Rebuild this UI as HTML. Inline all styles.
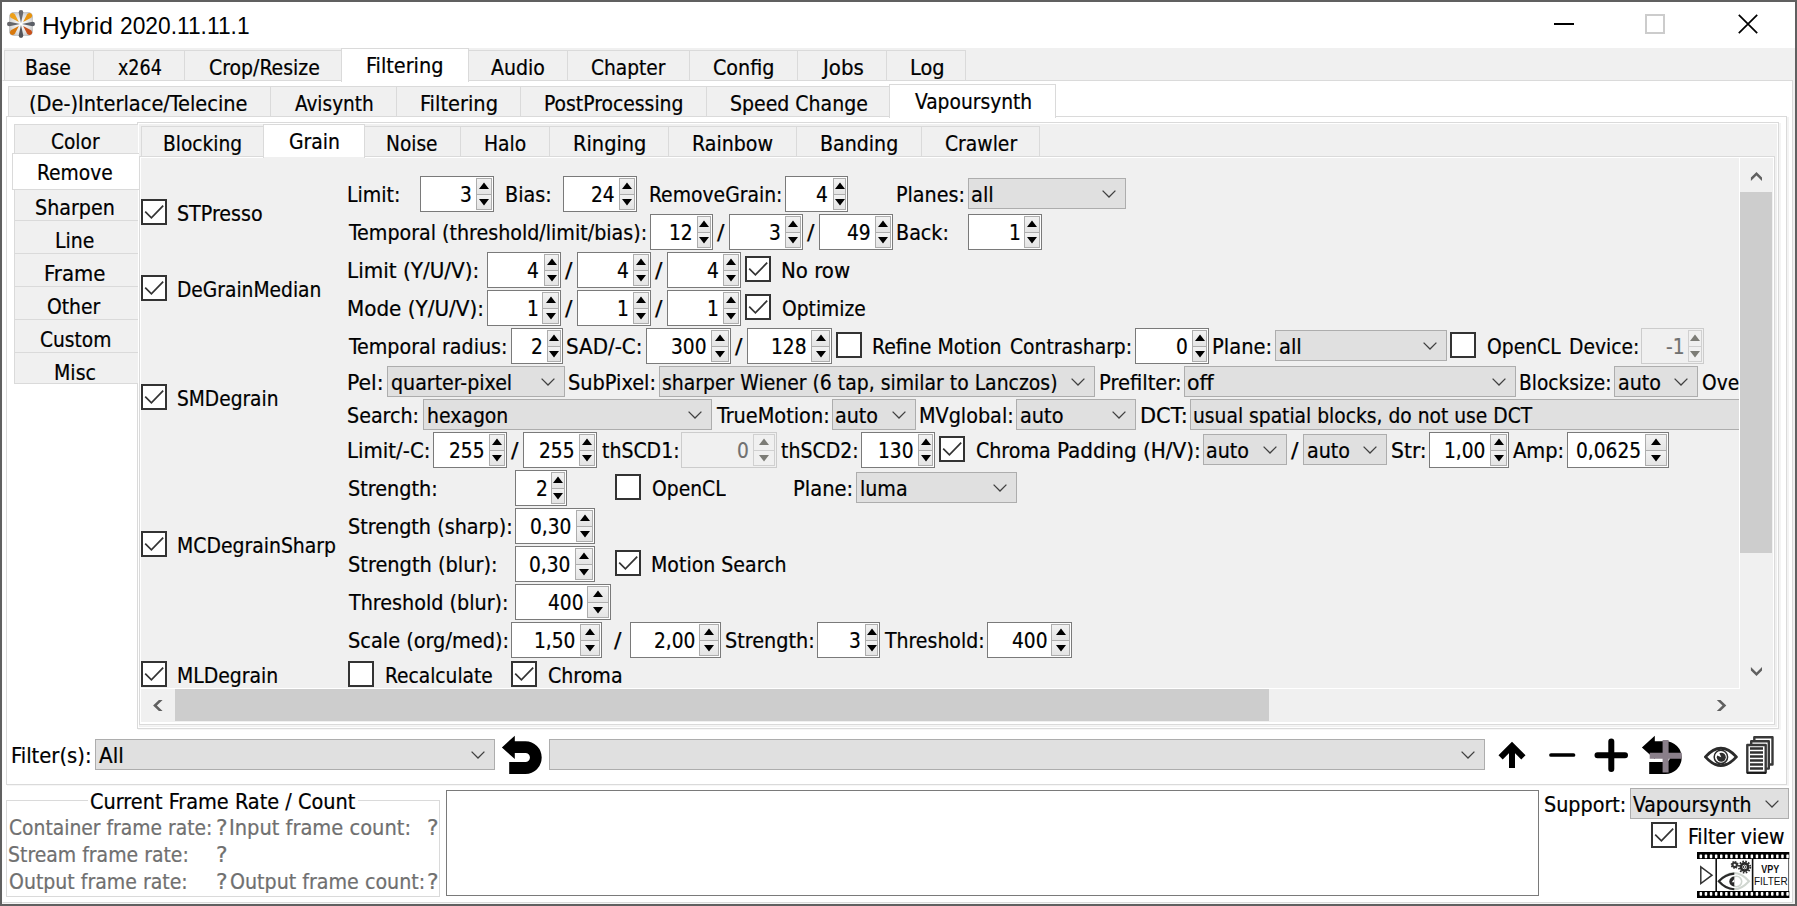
<!DOCTYPE html>
<html lang="en"><head><meta charset="utf-8"><title>Hybrid 2020.11.11.1</title>
<style>
html,body{margin:0;padding:0;}
body{width:1797px;height:906px;overflow:hidden;background:#f0f0f0;position:relative;font-family:"DejaVu Sans Condensed","DejaVu Sans","Liberation Sans",sans-serif;font-stretch:condensed;}
#app{position:absolute;left:0;top:0;width:1797px;height:906px;overflow:hidden;}
#app div,#app span,#app svg{position:absolute;box-sizing:border-box;}
.t{white-space:pre;transform-origin:0 0;display:block;-webkit-text-stroke:0.22px currentColor;}
</style></head>
<body><div id="app">
<div style="left:0px;top:0px;width:1797px;height:906px;background:#606060;"></div>
<div style="left:2px;top:2px;width:1793px;height:902px;background:#f0f0f0;"></div>
<div style="left:2px;top:2px;width:1793px;height:46px;background:#fff;"></div>
<div style="left:2px;top:48px;width:2px;height:32px;background:#fbfbfb;"></div>
<div style="left:9px;top:12px;width:24px;height:24px;background:radial-gradient(circle at 50% 50%,#ffffff 0%,#e0e0e0 55%,#a8a8a8 100%);border-radius:5px;"></div>
<svg style="left:6px;top:9px" width="30" height="30" viewBox="0 0 30 30">
<g transform="translate(15,15)">
<path d="M0,-1 L-2.3,-11.6 Q-2.3,-14 0,-14 Q2.3,-14 2.3,-11.6 Z" fill="#6a6a6e"/>
<path d="M0,1 L-2.3,11.6 Q-2.3,14 0,14 Q2.3,14 2.3,11.6 Z" fill="#55555a"/>
<path d="M-1,0 L-11.6,-2.3 Q-14,-2.3 -14,0 Q-14,2.3 -11.6,2.3 Z" fill="#66666a"/>
<path d="M1,0 L11.6,-2.3 Q14,-2.3 14,0 Q14,2.3 11.6,2.3 Z" fill="#5a5e66"/>
<g transform="rotate(45)"><path d="M0,-3 L-2.7,-11.6 Q-2.4,-14.6 0,-14.6 Q2.4,-14.6 2.7,-11.6 Z" fill="#e8930c"/></g>
<g transform="rotate(-45)"><path d="M0,-3 L-2.7,-11.6 Q-2.4,-14.6 0,-14.6 Q2.4,-14.6 2.7,-11.6 Z" fill="#eda01a"/></g>
<g transform="rotate(135)"><path d="M0,-3 L-2.7,-11.6 Q-2.4,-14.6 0,-14.6 Q2.4,-14.6 2.7,-11.6 Z" fill="#c8501a"/></g>
<g transform="rotate(-135)"><path d="M0,-3 L-2.7,-11.6 Q-2.4,-14.6 0,-14.6 Q2.4,-14.6 2.7,-11.6 Z" fill="#d8780c"/></g>
</g></svg>
<span class="t" style='left:41.90px;top:12.00px;line-height:27px;font-size:24px;transform:scaleX(1.0226);color:#000;font-family:"Liberation Sans",sans-serif;-webkit-text-stroke:0;'>Hybrid</span>
<span class="t" style='left:119.55px;top:12.00px;line-height:27px;font-size:24px;transform:scaleX(0.9486);color:#000;font-family:"Liberation Sans",sans-serif;-webkit-text-stroke:0;'>2020.11.11.1</span>
<div style="left:1554px;top:23px;width:20px;height:2px;background:#000;"></div>
<div style="left:1645px;top:14px;width:20px;height:20px;border:2px solid #cccccc;"></div>
<svg style="left:1736px;top:12px" width="24" height="24" viewBox="0 0 24 24"><path d="M2.8,2.8 L21.2,21.2 M21.2,2.8 L2.8,21.2" stroke="#000" stroke-width="1.7" fill="none"/></svg>
<div style="left:2px;top:80px;width:1791px;height:823px;background:#fff;border:1px solid #dadada;border-left-color:#fcfcfc;"></div>
<div style="left:2px;top:903px;width:1793px;height:1px;background:#f4f4f4;"></div>
<div style="left:4px;top:50px;width:90px;height:30px;background:#f0f0f0;border:1px solid #dadada;border-bottom:none;"></div>
<span class="t" style='left:25.35px;top:55.00px;line-height:25px;font-size:22px;transform:scaleX(0.9511);color:#000;'>Base</span>
<div style="left:93px;top:50px;width:92px;height:30px;background:#f0f0f0;border:1px solid #dadada;border-bottom:none;"></div>
<span class="t" style='left:117.50px;top:55.00px;line-height:25px;font-size:22px;transform:scaleX(0.8857);color:#000;'>x264</span>
<div style="left:184px;top:50px;width:158px;height:30px;background:#f0f0f0;border:1px solid #dadada;border-bottom:none;"></div>
<span class="t" style='left:208.70px;top:55.00px;line-height:25px;font-size:22px;transform:scaleX(0.9545);color:#000;'>Crop/Resize</span>
<div style="left:468px;top:50px;width:100px;height:30px;background:#f0f0f0;border:1px solid #dadada;border-bottom:none;"></div>
<span class="t" style='left:490.65px;top:55.00px;line-height:25px;font-size:22px;transform:scaleX(0.9583);color:#000;'>Audio</span>
<div style="left:567px;top:50px;width:123px;height:30px;background:#f0f0f0;border:1px solid #dadada;border-bottom:none;"></div>
<span class="t" style='left:591.30px;top:55.00px;line-height:25px;font-size:22px;transform:scaleX(0.9400);color:#000;'>Chapter</span>
<div style="left:689px;top:50px;width:109px;height:30px;background:#f0f0f0;border:1px solid #dadada;border-bottom:none;"></div>
<span class="t" style='left:713.20px;top:55.00px;line-height:25px;font-size:22px;transform:scaleX(0.9672);color:#000;'>Config</span>
<div style="left:797px;top:50px;width:90px;height:30px;background:#f0f0f0;border:1px solid #dadada;border-bottom:none;"></div>
<span class="t" style='left:822.80px;top:55.00px;line-height:25px;font-size:22px;transform:scaleX(0.9998);color:#000;'>Jobs</span>
<div style="left:886px;top:50px;width:80px;height:30px;background:#f0f0f0;border:1px solid #dadada;border-bottom:none;"></div>
<span class="t" style='left:909.90px;top:55.00px;line-height:25px;font-size:22px;transform:scaleX(0.9779);color:#000;'>Log</span>
<div style="left:341px;top:48px;width:128px;height:34px;background:#fff;border:1px solid #dadada;border-bottom:none;"></div>
<span class="t" style='left:366.30px;top:53.00px;line-height:25px;font-size:22px;transform:scaleX(0.9743);color:#000;'>Filtering</span>
<div style="left:6px;top:116px;width:1781px;height:669px;background:#fff;border:1px solid #dadada;"></div>
<div style="left:1787px;top:117px;width:2px;height:669px;background:#f3f3f3;"></div>
<div style="left:7px;top:785px;width:1782px;height:1px;background:#f6f6f6;"></div>
<div style="left:8px;top:86px;width:263px;height:30px;background:#f0f0f0;border:1px solid #dadada;border-bottom:none;"></div>
<span class="t" style='left:29.15px;top:91.00px;line-height:25px;font-size:22px;transform:scaleX(0.9792);color:#000;'>(De-)Interlace/Telecine</span>
<div style="left:270px;top:86px;width:127px;height:30px;background:#f0f0f0;border:1px solid #dadada;border-bottom:none;"></div>
<span class="t" style='left:294.75px;top:91.00px;line-height:25px;font-size:22px;transform:scaleX(0.9339);color:#000;'>Avisynth</span>
<div style="left:396px;top:86px;width:125px;height:30px;background:#f0f0f0;border:1px solid #dadada;border-bottom:none;"></div>
<span class="t" style='left:419.60px;top:91.00px;line-height:25px;font-size:22px;transform:scaleX(0.9816);color:#000;'>Filtering</span>
<div style="left:520px;top:86px;width:187px;height:30px;background:#f0f0f0;border:1px solid #dadada;border-bottom:none;"></div>
<span class="t" style='left:544.15px;top:91.00px;line-height:25px;font-size:22px;transform:scaleX(0.9491);color:#000;'>PostProcessing</span>
<div style="left:706px;top:86px;width:184px;height:30px;background:#f0f0f0;border:1px solid #dadada;border-bottom:none;"></div>
<span class="t" style='left:730.05px;top:91.00px;line-height:25px;font-size:22px;transform:scaleX(0.9559);color:#000;'>Speed Change</span>
<div style="left:889px;top:84px;width:167px;height:34px;background:#fff;border:1px solid #dadada;border-bottom:none;"></div>
<span class="t" style='left:915.25px;top:89.00px;line-height:25px;font-size:22px;transform:scaleX(0.9437);color:#000;'>Vapoursynth</span>
<div style="left:137px;top:122px;width:1642px;height:607px;background:#fff;border:1px solid #dadada;"></div>
<div style="left:1779px;top:123px;width:2px;height:607px;background:#f4f4f4;"></div>
<div style="left:138px;top:729px;width:1643px;height:1px;background:#f6f6f6;"></div>
<div style="left:139px;top:124px;width:1638px;height:603px;background:#f0f0f0;"></div>
<div style="left:14px;top:124px;width:124px;height:30px;background:#f0f0f0;border:1px solid #dadada;border-right:none;"></div>
<span class="t" style='left:50.50px;top:129.00px;line-height:25px;font-size:22px;transform:scaleX(0.9390);color:#000;'>Color</span>
<div style="left:14px;top:189px;width:124px;height:32px;background:#f0f0f0;border:1px solid #dadada;border-right:none;"></div>
<span class="t" style='left:35.05px;top:195.00px;line-height:25px;font-size:22px;transform:scaleX(0.9651);color:#000;'>Sharpen</span>
<div style="left:14px;top:220px;width:124px;height:34px;background:#f0f0f0;border:1px solid #dadada;border-right:none;"></div>
<span class="t" style='left:55.45px;top:228.00px;line-height:25px;font-size:22px;transform:scaleX(0.9544);color:#000;'>Line</span>
<div style="left:14px;top:253px;width:124px;height:34px;background:#f0f0f0;border:1px solid #dadada;border-right:none;"></div>
<span class="t" style='left:43.60px;top:261.00px;line-height:25px;font-size:22px;transform:scaleX(0.9981);color:#000;'>Frame</span>
<div style="left:14px;top:286px;width:124px;height:34px;background:#f0f0f0;border:1px solid #dadada;border-right:none;"></div>
<span class="t" style='left:47.40px;top:294.00px;line-height:25px;font-size:22px;transform:scaleX(0.9482);color:#000;'>Other</span>
<div style="left:14px;top:319px;width:124px;height:34px;background:#f0f0f0;border:1px solid #dadada;border-right:none;"></div>
<span class="t" style='left:39.50px;top:327.00px;line-height:25px;font-size:22px;transform:scaleX(0.9421);color:#000;'>Custom</span>
<div style="left:14px;top:352px;width:124px;height:32px;background:#f0f0f0;border:1px solid #dadada;border-right:none;"></div>
<span class="t" style='left:54.25px;top:360.00px;line-height:25px;font-size:22px;transform:scaleX(0.9584);color:#000;'>Misc</span>
<div style="left:12px;top:153px;width:127px;height:37px;background:#fff;border:1px solid #dadada;border-right:none;"></div>
<span class="t" style='left:36.85px;top:160.00px;line-height:25px;font-size:22px;transform:scaleX(0.9432);color:#000;'>Remove</span>
<div style="left:139px;top:156px;width:1636px;height:569px;background:#f0f0f0;border:1px solid #dadada;"></div>
<div style="left:140px;top:157px;width:1634px;height:567px;border:1px solid #fff;border-bottom-width:2px;"></div>
<div style="left:140px;top:725px;width:1635px;height:1px;background:#f5f5f5;"></div>
<div style="left:141px;top:126px;width:123px;height:30px;background:#f0f0f0;border:1px solid #dadada;border-bottom:none;"></div>
<span class="t" style='left:162.65px;top:131.00px;line-height:25px;font-size:22px;transform:scaleX(0.9400);color:#000;'>Blocking</span>
<div style="left:364px;top:126px;width:97px;height:30px;background:#f0f0f0;border:1px solid #dadada;border-bottom:none;"></div>
<span class="t" style='left:385.75px;top:131.00px;line-height:25px;font-size:22px;transform:scaleX(0.9381);color:#000;'>Noise</span>
<div style="left:460px;top:126px;width:90px;height:30px;background:#f0f0f0;border:1px solid #dadada;border-bottom:none;"></div>
<span class="t" style='left:483.75px;top:131.00px;line-height:25px;font-size:22px;transform:scaleX(0.9460);color:#000;'>Halo</span>
<div style="left:549px;top:126px;width:120px;height:30px;background:#f0f0f0;border:1px solid #dadada;border-bottom:none;"></div>
<span class="t" style='left:572.70px;top:131.00px;line-height:25px;font-size:22px;transform:scaleX(0.9793);color:#000;'>Ringing</span>
<div style="left:668px;top:126px;width:129px;height:30px;background:#f0f0f0;border:1px solid #dadada;border-bottom:none;"></div>
<span class="t" style='left:691.75px;top:131.00px;line-height:25px;font-size:22px;transform:scaleX(0.9614);color:#000;'>Rainbow</span>
<div style="left:796px;top:126px;width:126px;height:30px;background:#f0f0f0;border:1px solid #dadada;border-bottom:none;"></div>
<span class="t" style='left:820.25px;top:131.00px;line-height:25px;font-size:22px;transform:scaleX(0.9606);color:#000;'>Banding</span>
<div style="left:921px;top:126px;width:119px;height:30px;background:#f0f0f0;border:1px solid #dadada;border-bottom:none;"></div>
<span class="t" style='left:945.30px;top:131.00px;line-height:25px;font-size:22px;transform:scaleX(0.9480);color:#000;'>Crawler</span>
<div style="left:263px;top:124px;width:102px;height:34px;background:#fff;border:1px solid #dadada;border-bottom:none;"></div>
<span class="t" style='left:288.50px;top:129.00px;line-height:25px;font-size:22px;transform:scaleX(0.9499);color:#000;'>Grain</span>
<div style="left:264px;top:157px;width:100px;height:1px;background:#f0f0f0;"></div>
<div style="left:141px;top:158px;width:1599px;height:530px;overflow:hidden;">
<div style="left:0px;top:41px;width:26px;height:26px;background:#fff;border:2px solid #333333;"></div>
<svg style="left:0px;top:41px" width="26" height="26" viewBox="0 0 26 26"><path d="M4.2,12.6 L10.4,18.8 L22.2,6.6" stroke="#333333" stroke-width="1.7" fill="none"/></svg>
<span class="t" style='left:36.15px;top:43.00px;line-height:25px;font-size:22px;transform:scaleX(0.9643);color:#000;'>STPresso</span>
<div style="left:0px;top:117px;width:26px;height:26px;background:#fff;border:2px solid #333333;"></div>
<svg style="left:0px;top:117px" width="26" height="26" viewBox="0 0 26 26"><path d="M4.2,12.6 L10.4,18.8 L22.2,6.6" stroke="#333333" stroke-width="1.7" fill="none"/></svg>
<span class="t" style='left:35.65px;top:119.00px;line-height:25px;font-size:22px;transform:scaleX(0.9430);color:#000;'>DeGrainMedian</span>
<div style="left:0px;top:226px;width:26px;height:26px;background:#fff;border:2px solid #333333;"></div>
<svg style="left:0px;top:226px" width="26" height="26" viewBox="0 0 26 26"><path d="M4.2,12.6 L10.4,18.8 L22.2,6.6" stroke="#333333" stroke-width="1.7" fill="none"/></svg>
<span class="t" style='left:36.15px;top:228.00px;line-height:25px;font-size:22px;transform:scaleX(0.9400);color:#000;'>SMDegrain</span>
<div style="left:0px;top:373px;width:26px;height:26px;background:#fff;border:2px solid #333333;"></div>
<svg style="left:0px;top:373px" width="26" height="26" viewBox="0 0 26 26"><path d="M4.2,12.6 L10.4,18.8 L22.2,6.6" stroke="#333333" stroke-width="1.7" fill="none"/></svg>
<span class="t" style='left:36.05px;top:375.00px;line-height:25px;font-size:22px;transform:scaleX(0.9513);color:#000;'>MCDegrainSharp</span>
<div style="left:0px;top:503px;width:26px;height:26px;background:#fff;border:2px solid #333333;"></div>
<svg style="left:0px;top:503px" width="26" height="26" viewBox="0 0 26 26"><path d="M4.2,12.6 L10.4,18.8 L22.2,6.6" stroke="#333333" stroke-width="1.7" fill="none"/></svg>
<span class="t" style='left:36.15px;top:505.00px;line-height:25px;font-size:22px;transform:scaleX(0.9517);color:#000;'>MLDegrain</span>
<span class="t" style='left:206.15px;top:24.00px;line-height:25px;font-size:22px;transform:scaleX(0.9584);color:#000;'>Limit:</span>
<div style="left:279px;top:18px;width:74px;height:36px;background:#fff;border:1px solid #7a7a7a;"></div>
<div style="left:335px;top:20px;width:16px;height:17px;background:linear-gradient(#f2f2f2,#e4e4e4);border:1px solid #adadad;"></div>
<div style="left:335px;top:36px;width:16px;height:16px;background:linear-gradient(#f2f2f2,#e4e4e4);border:1px solid #adadad;"></div>
<svg style="left:335px;top:18px" width="16" height="36" viewBox="0 0 16 36"><path d="M8,6.6 L13,13 L3,13 Z M3,23 L13,23 L8,29.4 Z" fill="#000"/></svg>
<span class="t" style='left:319.05px;top:24.00px;line-height:25px;font-size:22px;transform:scaleX(0.9400);color:#000;'>3</span>
<span class="t" style='left:364.00px;top:24.00px;line-height:25px;font-size:22px;transform:scaleX(0.9685);color:#000;'>Bias:</span>
<div style="left:422px;top:18px;width:74px;height:36px;background:#fff;border:1px solid #7a7a7a;"></div>
<div style="left:478px;top:20px;width:16px;height:17px;background:linear-gradient(#f2f2f2,#e4e4e4);border:1px solid #adadad;"></div>
<div style="left:478px;top:36px;width:16px;height:16px;background:linear-gradient(#f2f2f2,#e4e4e4);border:1px solid #adadad;"></div>
<svg style="left:478px;top:18px" width="16" height="36" viewBox="0 0 16 36"><path d="M8,6.6 L13,13 L3,13 Z M3,23 L13,23 L8,29.4 Z" fill="#000"/></svg>
<span class="t" style='left:449.50px;top:24.00px;line-height:25px;font-size:22px;transform:scaleX(0.9400);color:#000;'>24</span>
<span class="t" style='left:507.75px;top:24.00px;line-height:25px;font-size:22px;transform:scaleX(0.9492);color:#000;'>RemoveGrain:</span>
<div style="left:644px;top:18px;width:63px;height:36px;background:#fff;border:1px solid #7a7a7a;"></div>
<div style="left:692px;top:20px;width:13px;height:17px;background:linear-gradient(#f2f2f2,#e4e4e4);border:1px solid #adadad;"></div>
<div style="left:692px;top:36px;width:13px;height:16px;background:linear-gradient(#f2f2f2,#e4e4e4);border:1px solid #adadad;"></div>
<svg style="left:690.5px;top:18px" width="16" height="36" viewBox="0 0 16 36"><path d="M8,6.6 L13,13 L3,13 Z M3,23 L13,23 L8,29.4 Z" fill="#000"/></svg>
<span class="t" style='left:675.25px;top:24.00px;line-height:25px;font-size:22px;transform:scaleX(0.9400);color:#000;'>4</span>
<span class="t" style='left:755.30px;top:24.00px;line-height:25px;font-size:22px;transform:scaleX(0.9676);color:#000;'>Planes:</span>
<div style="left:827px;top:20px;width:158px;height:31px;background:#e0e0e0;border:1px solid #adadad;"></div>
<svg style="left:960.3px;top:31.4px" width="16" height="10" viewBox="0 0 16 10"><path d="M1.6,1.6 L8,8 L14.4,1.6" stroke="#404040" stroke-width="1.3" fill="none"/></svg>
<span class="t" style='left:830.15px;top:24.00px;line-height:25px;font-size:22px;transform:scaleX(0.9852);color:#000;'>all</span>
<span class="t" style='left:207.90px;top:62.00px;line-height:25px;font-size:22px;transform:scaleX(0.9641);color:#000;'>Temporal (threshold/limit/bias):</span>
<div style="left:509px;top:56px;width:63px;height:36px;background:#fff;border:1px solid #7a7a7a;"></div>
<div style="left:556px;top:58px;width:14px;height:17px;background:linear-gradient(#f2f2f2,#e4e4e4);border:1px solid #adadad;"></div>
<div style="left:556px;top:74px;width:14px;height:16px;background:linear-gradient(#f2f2f2,#e4e4e4);border:1px solid #adadad;"></div>
<svg style="left:555px;top:56px" width="16" height="36" viewBox="0 0 16 36"><path d="M8,6.6 L13,13 L3,13 Z M3,23 L13,23 L8,29.4 Z" fill="#000"/></svg>
<span class="t" style='left:528.25px;top:62.00px;line-height:25px;font-size:22px;transform:scaleX(0.9400);color:#000;'>12</span>
<span class="t" style='left:576.20px;top:62.00px;line-height:25px;font-size:22px;transform:scaleX(1.1208);color:#000;'>/</span>
<div style="left:588px;top:56px;width:74px;height:36px;background:#fff;border:1px solid #7a7a7a;"></div>
<div style="left:644px;top:58px;width:16px;height:17px;background:linear-gradient(#f2f2f2,#e4e4e4);border:1px solid #adadad;"></div>
<div style="left:644px;top:74px;width:16px;height:16px;background:linear-gradient(#f2f2f2,#e4e4e4);border:1px solid #adadad;"></div>
<svg style="left:644px;top:56px" width="16" height="36" viewBox="0 0 16 36"><path d="M8,6.6 L13,13 L3,13 Z M3,23 L13,23 L8,29.4 Z" fill="#000"/></svg>
<span class="t" style='left:628.25px;top:62.00px;line-height:25px;font-size:22px;transform:scaleX(0.9400);color:#000;'>3</span>
<span class="t" style='left:666.20px;top:62.00px;line-height:25px;font-size:22px;transform:scaleX(1.1208);color:#000;'>/</span>
<div style="left:678px;top:56px;width:74px;height:36px;background:#fff;border:1px solid #7a7a7a;"></div>
<div style="left:734px;top:58px;width:16px;height:17px;background:linear-gradient(#f2f2f2,#e4e4e4);border:1px solid #adadad;"></div>
<div style="left:734px;top:74px;width:16px;height:16px;background:linear-gradient(#f2f2f2,#e4e4e4);border:1px solid #adadad;"></div>
<svg style="left:734px;top:56px" width="16" height="36" viewBox="0 0 16 36"><path d="M8,6.6 L13,13 L3,13 Z M3,23 L13,23 L8,29.4 Z" fill="#000"/></svg>
<span class="t" style='left:706.25px;top:62.00px;line-height:25px;font-size:22px;transform:scaleX(0.9400);color:#000;'>49</span>
<span class="t" style='left:755.30px;top:62.00px;line-height:25px;font-size:22px;transform:scaleX(0.9667);color:#000;'>Back:</span>
<div style="left:827px;top:56px;width:74px;height:36px;background:#fff;border:1px solid #7a7a7a;"></div>
<div style="left:883px;top:58px;width:16px;height:17px;background:linear-gradient(#f2f2f2,#e4e4e4);border:1px solid #adadad;"></div>
<div style="left:883px;top:74px;width:16px;height:16px;background:linear-gradient(#f2f2f2,#e4e4e4);border:1px solid #adadad;"></div>
<svg style="left:883px;top:56px" width="16" height="36" viewBox="0 0 16 36"><path d="M8,6.6 L13,13 L3,13 Z M3,23 L13,23 L8,29.4 Z" fill="#000"/></svg>
<span class="t" style='left:867.60px;top:62.00px;line-height:25px;font-size:22px;transform:scaleX(0.9400);color:#000;'>1</span>
<span class="t" style='left:205.90px;top:100.00px;line-height:25px;font-size:22px;transform:scaleX(1.0102);color:#000;'>Limit (Y/U/V):</span>
<div style="left:346px;top:94px;width:74px;height:36px;background:#fff;border:1px solid #7a7a7a;"></div>
<div style="left:403px;top:96px;width:15px;height:17px;background:linear-gradient(#f2f2f2,#e4e4e4);border:1px solid #adadad;"></div>
<div style="left:403px;top:112px;width:15px;height:16px;background:linear-gradient(#f2f2f2,#e4e4e4);border:1px solid #adadad;"></div>
<svg style="left:402.5px;top:94px" width="16" height="36" viewBox="0 0 16 36"><path d="M8,6.6 L13,13 L3,13 Z M3,23 L13,23 L8,29.4 Z" fill="#000"/></svg>
<span class="t" style='left:386.35px;top:100.00px;line-height:25px;font-size:22px;transform:scaleX(0.9400);color:#000;'>4</span>
<span class="t" style='left:424.00px;top:100.00px;line-height:25px;font-size:22px;transform:scaleX(1.1208);color:#000;'>/</span>
<div style="left:436px;top:94px;width:74px;height:36px;background:#fff;border:1px solid #7a7a7a;"></div>
<div style="left:492px;top:96px;width:16px;height:17px;background:linear-gradient(#f2f2f2,#e4e4e4);border:1px solid #adadad;"></div>
<div style="left:492px;top:112px;width:16px;height:16px;background:linear-gradient(#f2f2f2,#e4e4e4);border:1px solid #adadad;"></div>
<svg style="left:492px;top:94px" width="16" height="36" viewBox="0 0 16 36"><path d="M8,6.6 L13,13 L3,13 Z M3,23 L13,23 L8,29.4 Z" fill="#000"/></svg>
<span class="t" style='left:475.75px;top:100.00px;line-height:25px;font-size:22px;transform:scaleX(0.9400);color:#000;'>4</span>
<span class="t" style='left:514.00px;top:100.00px;line-height:25px;font-size:22px;transform:scaleX(1.1208);color:#000;'>/</span>
<div style="left:526px;top:94px;width:74px;height:36px;background:#fff;border:1px solid #7a7a7a;"></div>
<div style="left:582px;top:96px;width:16px;height:17px;background:linear-gradient(#f2f2f2,#e4e4e4);border:1px solid #adadad;"></div>
<div style="left:582px;top:112px;width:16px;height:16px;background:linear-gradient(#f2f2f2,#e4e4e4);border:1px solid #adadad;"></div>
<svg style="left:582px;top:94px" width="16" height="36" viewBox="0 0 16 36"><path d="M8,6.6 L13,13 L3,13 Z M3,23 L13,23 L8,29.4 Z" fill="#000"/></svg>
<span class="t" style='left:565.85px;top:100.00px;line-height:25px;font-size:22px;transform:scaleX(0.9400);color:#000;'>4</span>
<div style="left:604px;top:98px;width:26px;height:26px;background:#fff;border:2px solid #333333;"></div>
<svg style="left:604px;top:98px" width="26" height="26" viewBox="0 0 26 26"><path d="M4.2,12.6 L10.4,18.8 L22.2,6.6" stroke="#333333" stroke-width="1.7" fill="none"/></svg>
<span class="t" style='left:639.50px;top:100.00px;line-height:25px;font-size:22px;transform:scaleX(0.9987);color:#000;'>No row</span>
<span class="t" style='left:205.90px;top:138.00px;line-height:25px;font-size:22px;transform:scaleX(1.0087);color:#000;'>Mode (Y/U/V):</span>
<div style="left:346px;top:132px;width:74px;height:36px;background:#fff;border:1px solid #7a7a7a;"></div>
<div style="left:401px;top:134px;width:17px;height:17px;background:linear-gradient(#f2f2f2,#e4e4e4);border:1px solid #adadad;"></div>
<div style="left:401px;top:150px;width:17px;height:16px;background:linear-gradient(#f2f2f2,#e4e4e4);border:1px solid #adadad;"></div>
<svg style="left:401.5px;top:132px" width="16" height="36" viewBox="0 0 16 36"><path d="M8,6.6 L13,13 L3,13 Z M3,23 L13,23 L8,29.4 Z" fill="#000"/></svg>
<span class="t" style='left:385.90px;top:138.00px;line-height:25px;font-size:22px;transform:scaleX(0.9400);color:#000;'>1</span>
<span class="t" style='left:424.00px;top:138.00px;line-height:25px;font-size:22px;transform:scaleX(1.1208);color:#000;'>/</span>
<div style="left:436px;top:132px;width:74px;height:36px;background:#fff;border:1px solid #7a7a7a;"></div>
<div style="left:492px;top:134px;width:16px;height:17px;background:linear-gradient(#f2f2f2,#e4e4e4);border:1px solid #adadad;"></div>
<div style="left:492px;top:150px;width:16px;height:16px;background:linear-gradient(#f2f2f2,#e4e4e4);border:1px solid #adadad;"></div>
<svg style="left:492px;top:132px" width="16" height="36" viewBox="0 0 16 36"><path d="M8,6.6 L13,13 L3,13 Z M3,23 L13,23 L8,29.4 Z" fill="#000"/></svg>
<span class="t" style='left:476.00px;top:138.00px;line-height:25px;font-size:22px;transform:scaleX(0.9400);color:#000;'>1</span>
<span class="t" style='left:514.00px;top:138.00px;line-height:25px;font-size:22px;transform:scaleX(1.1208);color:#000;'>/</span>
<div style="left:526px;top:132px;width:74px;height:36px;background:#fff;border:1px solid #7a7a7a;"></div>
<div style="left:582px;top:134px;width:16px;height:17px;background:linear-gradient(#f2f2f2,#e4e4e4);border:1px solid #adadad;"></div>
<div style="left:582px;top:150px;width:16px;height:16px;background:linear-gradient(#f2f2f2,#e4e4e4);border:1px solid #adadad;"></div>
<svg style="left:582px;top:132px" width="16" height="36" viewBox="0 0 16 36"><path d="M8,6.6 L13,13 L3,13 Z M3,23 L13,23 L8,29.4 Z" fill="#000"/></svg>
<span class="t" style='left:566.00px;top:138.00px;line-height:25px;font-size:22px;transform:scaleX(0.9400);color:#000;'>1</span>
<div style="left:604px;top:136px;width:26px;height:26px;background:#fff;border:2px solid #333333;"></div>
<svg style="left:604px;top:136px" width="26" height="26" viewBox="0 0 26 26"><path d="M4.2,12.6 L10.4,18.8 L22.2,6.6" stroke="#333333" stroke-width="1.7" fill="none"/></svg>
<span class="t" style='left:640.50px;top:138.00px;line-height:25px;font-size:22px;transform:scaleX(0.9446);color:#000;'>Optimize</span>
<span class="t" style='left:207.90px;top:176.00px;line-height:25px;font-size:22px;transform:scaleX(0.9638);color:#000;'>Temporal radius:</span>
<div style="left:370px;top:170px;width:52px;height:36px;background:#fff;border:1px solid #7a7a7a;"></div>
<div style="left:406px;top:172px;width:14px;height:17px;background:linear-gradient(#f2f2f2,#e4e4e4);border:1px solid #adadad;"></div>
<div style="left:406px;top:188px;width:14px;height:16px;background:linear-gradient(#f2f2f2,#e4e4e4);border:1px solid #adadad;"></div>
<svg style="left:405px;top:170px" width="16" height="36" viewBox="0 0 16 36"><path d="M8,6.6 L13,13 L3,13 Z M3,23 L13,23 L8,29.4 Z" fill="#000"/></svg>
<span class="t" style='left:390.20px;top:176.00px;line-height:25px;font-size:22px;transform:scaleX(0.9400);color:#000;'>2</span>
<span class="t" style='left:425.05px;top:176.00px;line-height:25px;font-size:22px;transform:scaleX(1.0050);color:#000;'>SAD/-C:</span>
<div style="left:505px;top:170px;width:85px;height:36px;background:#fff;border:1px solid #7a7a7a;"></div>
<div style="left:570px;top:172px;width:18px;height:17px;background:linear-gradient(#f2f2f2,#e4e4e4);border:1px solid #adadad;"></div>
<div style="left:570px;top:188px;width:18px;height:16px;background:linear-gradient(#f2f2f2,#e4e4e4);border:1px solid #adadad;"></div>
<svg style="left:571px;top:170px" width="16" height="36" viewBox="0 0 16 36"><path d="M8,6.6 L13,13 L3,13 Z M3,23 L13,23 L8,29.4 Z" fill="#000"/></svg>
<span class="t" style='left:529.75px;top:176.00px;line-height:25px;font-size:22px;transform:scaleX(0.9400);color:#000;'>300</span>
<span class="t" style='left:594.20px;top:176.00px;line-height:25px;font-size:22px;transform:scaleX(1.1208);color:#000;'>/</span>
<div style="left:606px;top:170px;width:85px;height:36px;background:#fff;border:1px solid #7a7a7a;"></div>
<div style="left:670px;top:172px;width:19px;height:17px;background:linear-gradient(#f2f2f2,#e4e4e4);border:1px solid #adadad;"></div>
<div style="left:670px;top:188px;width:19px;height:16px;background:linear-gradient(#f2f2f2,#e4e4e4);border:1px solid #adadad;"></div>
<svg style="left:671.5px;top:170px" width="16" height="36" viewBox="0 0 16 36"><path d="M8,6.6 L13,13 L3,13 Z M3,23 L13,23 L8,29.4 Z" fill="#000"/></svg>
<span class="t" style='left:630.25px;top:176.00px;line-height:25px;font-size:22px;transform:scaleX(0.9400);color:#000;'>128</span>
<div style="left:695px;top:174px;width:26px;height:26px;background:#fff;border:2px solid #333333;"></div>
<span class="t" style='left:731.05px;top:176.00px;line-height:25px;font-size:22px;transform:scaleX(0.9559);color:#000;'>Refine Motion</span>
<span class="t" style='left:868.50px;top:176.00px;line-height:25px;font-size:22px;transform:scaleX(0.9476);color:#000;'>Contrasharp:</span>
<div style="left:994px;top:170px;width:74px;height:36px;background:#fff;border:1px solid #7a7a7a;"></div>
<div style="left:1051px;top:172px;width:15px;height:17px;background:linear-gradient(#f2f2f2,#e4e4e4);border:1px solid #adadad;"></div>
<div style="left:1051px;top:188px;width:15px;height:16px;background:linear-gradient(#f2f2f2,#e4e4e4);border:1px solid #adadad;"></div>
<svg style="left:1050.5px;top:170px" width="16" height="36" viewBox="0 0 16 36"><path d="M8,6.6 L13,13 L3,13 Z M3,23 L13,23 L8,29.4 Z" fill="#000"/></svg>
<span class="t" style='left:1034.80px;top:176.00px;line-height:25px;font-size:22px;transform:scaleX(0.9400);color:#000;'>0</span>
<span class="t" style='left:1071.30px;top:176.00px;line-height:25px;font-size:22px;transform:scaleX(0.9857);color:#000;'>Plane:</span>
<div style="left:1134px;top:172px;width:172px;height:31px;background:#e0e0e0;border:1px solid #adadad;"></div>
<svg style="left:1281.3px;top:183.4px" width="16" height="10" viewBox="0 0 16 10"><path d="M1.6,1.6 L8,8 L14.4,1.6" stroke="#404040" stroke-width="1.3" fill="none"/></svg>
<span class="t" style='left:1137.95px;top:176.00px;line-height:25px;font-size:22px;transform:scaleX(0.9852);color:#000;'>all</span>
<div style="left:1309px;top:174px;width:26px;height:26px;background:#fff;border:2px solid #333333;"></div>
<span class="t" style='left:1345.80px;top:176.00px;line-height:25px;font-size:22px;transform:scaleX(0.9465);color:#000;'>OpenCL</span>
<span class="t" style='left:1427.55px;top:176.00px;line-height:25px;font-size:22px;transform:scaleX(0.9450);color:#000;'>Device:</span>
<div style="left:1500px;top:170px;width:63px;height:36px;background:#f0f0f0;border:1px solid #cccccc;"></div>
<div style="left:1547px;top:172px;width:14px;height:17px;background:#f0f0f0;border:1px solid #d0d0d0;"></div>
<div style="left:1547px;top:188px;width:14px;height:16px;background:#f0f0f0;border:1px solid #d0d0d0;"></div>
<svg style="left:1546px;top:170px" width="16" height="36" viewBox="0 0 16 36"><path d="M8,6.6 L13,13 L3,13 Z M3,23 L13,23 L8,29.4 Z" fill="#7c7c76"/></svg>
<span class="t" style='left:1525.05px;top:176.00px;line-height:25px;font-size:22px;transform:scaleX(0.9400);color:#707070;'>-1</span>
<span class="t" style='left:206.20px;top:212.00px;line-height:25px;font-size:22px;transform:scaleX(1.0308);color:#000;'>Pel:</span>
<div style="left:246px;top:208px;width:178px;height:31px;background:#e0e0e0;border:1px solid #adadad;"></div>
<svg style="left:399.3px;top:219.4px" width="16" height="10" viewBox="0 0 16 10"><path d="M1.6,1.6 L8,8 L14.4,1.6" stroke="#404040" stroke-width="1.3" fill="none"/></svg>
<span class="t" style='left:249.60px;top:212.00px;line-height:25px;font-size:22px;transform:scaleX(0.9619);color:#000;'>quarter-pixel</span>
<span class="t" style='left:427.25px;top:212.00px;line-height:25px;font-size:22px;transform:scaleX(0.9776);color:#000;'>SubPixel:</span>
<div style="left:518px;top:208px;width:436px;height:31px;background:#e0e0e0;border:1px solid #adadad;"></div>
<svg style="left:929.3px;top:219.4px" width="16" height="10" viewBox="0 0 16 10"><path d="M1.6,1.6 L8,8 L14.4,1.6" stroke="#404040" stroke-width="1.3" fill="none"/></svg>
<span class="t" style='left:521.40px;top:212.00px;line-height:25px;font-size:22px;transform:scaleX(0.9514);color:#000;'>sharper Wiener (6 tap, similar to Lanczos)</span>
<span class="t" style='left:957.50px;top:212.00px;line-height:25px;font-size:22px;transform:scaleX(0.9872);color:#000;'>Prefilter:</span>
<div style="left:1043px;top:208px;width:332px;height:31px;background:#e0e0e0;border:1px solid #adadad;"></div>
<svg style="left:1350.3px;top:219.4px" width="16" height="10" viewBox="0 0 16 10"><path d="M1.6,1.6 L8,8 L14.4,1.6" stroke="#404040" stroke-width="1.3" fill="none"/></svg>
<span class="t" style='left:1045.75px;top:212.00px;line-height:25px;font-size:22px;transform:scaleX(1.0360);color:#000;'>off</span>
<span class="t" style='left:1378.25px;top:212.00px;line-height:25px;font-size:22px;transform:scaleX(0.9374);color:#000;'>Blocksize:</span>
<div style="left:1473px;top:208px;width:84px;height:31px;background:#e0e0e0;border:1px solid #adadad;"></div>
<svg style="left:1532.3px;top:219.4px" width="16" height="10" viewBox="0 0 16 10"><path d="M1.6,1.6 L8,8 L14.4,1.6" stroke="#404040" stroke-width="1.3" fill="none"/></svg>
<span class="t" style='left:1476.55px;top:212.00px;line-height:25px;font-size:22px;transform:scaleX(0.9662);color:#000;'>auto</span>
<span class="t" style='left:1561.30px;top:212.00px;line-height:25px;font-size:22px;transform:scaleX(0.9400);color:#000;'>Overlap:</span>
<span class="t" style='left:206.25px;top:245.00px;line-height:25px;font-size:22px;transform:scaleX(0.9654);color:#000;'>Search:</span>
<div style="left:282px;top:241px;width:289px;height:31px;background:#e0e0e0;border:1px solid #adadad;"></div>
<svg style="left:546.3px;top:252.4px" width="16" height="10" viewBox="0 0 16 10"><path d="M1.6,1.6 L8,8 L14.4,1.6" stroke="#404040" stroke-width="1.3" fill="none"/></svg>
<span class="t" style='left:285.55px;top:245.00px;line-height:25px;font-size:22px;transform:scaleX(0.9522);color:#000;'>hexagon</span>
<span class="t" style='left:575.50px;top:245.00px;line-height:25px;font-size:22px;transform:scaleX(0.9754);color:#000;'>TrueMotion:</span>
<div style="left:691px;top:241px;width:84px;height:31px;background:#e0e0e0;border:1px solid #adadad;"></div>
<svg style="left:750.3px;top:252.4px" width="16" height="10" viewBox="0 0 16 10"><path d="M1.6,1.6 L8,8 L14.4,1.6" stroke="#404040" stroke-width="1.3" fill="none"/></svg>
<span class="t" style='left:693.95px;top:245.00px;line-height:25px;font-size:22px;transform:scaleX(0.9674);color:#000;'>auto</span>
<span class="t" style='left:777.80px;top:245.00px;line-height:25px;font-size:22px;transform:scaleX(0.9695);color:#000;'>MVglobal:</span>
<div style="left:875px;top:241px;width:120px;height:31px;background:#e0e0e0;border:1px solid #adadad;"></div>
<svg style="left:970.3px;top:252.4px" width="16" height="10" viewBox="0 0 16 10"><path d="M1.6,1.6 L8,8 L14.4,1.6" stroke="#404040" stroke-width="1.3" fill="none"/></svg>
<span class="t" style='left:878.55px;top:245.00px;line-height:25px;font-size:22px;transform:scaleX(0.9757);color:#000;'>auto</span>
<span class="t" style='left:998.50px;top:245.00px;line-height:25px;font-size:22px;transform:scaleX(1.0552);color:#000;'>DCT:</span>
<div style="left:1049px;top:241px;width:610px;height:31px;background:#e0e0e0;border:1px solid #adadad;"></div>
<svg style="left:1634.3px;top:252.4px" width="16" height="10" viewBox="0 0 16 10"><path d="M1.6,1.6 L8,8 L14.4,1.6" stroke="#404040" stroke-width="1.3" fill="none"/></svg>
<span class="t" style='left:1052.10px;top:245.00px;line-height:25px;font-size:22px;transform:scaleX(0.9445);color:#000;'>usual spatial blocks, do not use DCT</span>
<span class="t" style='left:205.90px;top:280.00px;line-height:25px;font-size:22px;transform:scaleX(1.0006);color:#000;'>Limit/-C:</span>
<div style="left:292px;top:274px;width:74px;height:36px;background:#fff;border:1px solid #7a7a7a;"></div>
<div style="left:348px;top:276px;width:16px;height:17px;background:linear-gradient(#f2f2f2,#e4e4e4);border:1px solid #adadad;"></div>
<div style="left:348px;top:292px;width:16px;height:16px;background:linear-gradient(#f2f2f2,#e4e4e4);border:1px solid #adadad;"></div>
<svg style="left:348px;top:274px" width="16" height="36" viewBox="0 0 16 36"><path d="M8,6.6 L13,13 L3,13 Z M3,23 L13,23 L8,29.4 Z" fill="#000"/></svg>
<span class="t" style='left:308.00px;top:280.00px;line-height:25px;font-size:22px;transform:scaleX(0.9400);color:#000;'>255</span>
<span class="t" style='left:370.40px;top:280.00px;line-height:25px;font-size:22px;transform:scaleX(1.1208);color:#000;'>/</span>
<div style="left:382px;top:274px;width:74px;height:36px;background:#fff;border:1px solid #7a7a7a;"></div>
<div style="left:438px;top:276px;width:16px;height:17px;background:linear-gradient(#f2f2f2,#e4e4e4);border:1px solid #adadad;"></div>
<div style="left:438px;top:292px;width:16px;height:16px;background:linear-gradient(#f2f2f2,#e4e4e4);border:1px solid #adadad;"></div>
<svg style="left:438px;top:274px" width="16" height="36" viewBox="0 0 16 36"><path d="M8,6.6 L13,13 L3,13 Z M3,23 L13,23 L8,29.4 Z" fill="#000"/></svg>
<span class="t" style='left:398.30px;top:280.00px;line-height:25px;font-size:22px;transform:scaleX(0.9400);color:#000;'>255</span>
<span class="t" style='left:460.50px;top:280.00px;line-height:25px;font-size:22px;transform:scaleX(0.9547);color:#000;'>thSCD1:</span>
<div style="left:540px;top:274px;width:96px;height:36px;background:#f0f0f0;border:1px solid #cccccc;"></div>
<div style="left:612px;top:276px;width:22px;height:17px;background:#f0f0f0;border:1px solid #d0d0d0;"></div>
<div style="left:612px;top:292px;width:22px;height:16px;background:#f0f0f0;border:1px solid #d0d0d0;"></div>
<svg style="left:615px;top:274px" width="16" height="36" viewBox="0 0 16 36"><path d="M8,6.6 L13,13 L3,13 Z M3,23 L13,23 L8,29.4 Z" fill="#7c7c76"/></svg>
<span class="t" style='left:596.00px;top:280.00px;line-height:25px;font-size:22px;transform:scaleX(0.9400);color:#707070;'>0</span>
<span class="t" style='left:639.80px;top:280.00px;line-height:25px;font-size:22px;transform:scaleX(0.9559);color:#000;'>thSCD2:</span>
<div style="left:720px;top:274px;width:74px;height:36px;background:#fff;border:1px solid #7a7a7a;"></div>
<div style="left:777px;top:276px;width:15px;height:17px;background:linear-gradient(#f2f2f2,#e4e4e4);border:1px solid #adadad;"></div>
<div style="left:777px;top:292px;width:15px;height:16px;background:linear-gradient(#f2f2f2,#e4e4e4);border:1px solid #adadad;"></div>
<svg style="left:776.5px;top:274px" width="16" height="36" viewBox="0 0 16 36"><path d="M8,6.6 L13,13 L3,13 Z M3,23 L13,23 L8,29.4 Z" fill="#000"/></svg>
<span class="t" style='left:736.75px;top:280.00px;line-height:25px;font-size:22px;transform:scaleX(0.9400);color:#000;'>130</span>
<div style="left:798px;top:278px;width:26px;height:26px;background:#fff;border:2px solid #333333;"></div>
<svg style="left:798px;top:278px" width="26" height="26" viewBox="0 0 26 26"><path d="M4.2,12.6 L10.4,18.8 L22.2,6.6" stroke="#333333" stroke-width="1.7" fill="none"/></svg>
<span class="t" style='left:835.00px;top:280.00px;line-height:25px;font-size:22px;transform:scaleX(0.9621);color:#000;'>Chroma</span>
<span class="t" style='left:916.30px;top:280.00px;line-height:25px;font-size:22px;transform:scaleX(1.0106);color:#000;'>Padding (H/V):</span>
<div style="left:1062px;top:276px;width:84px;height:31px;background:#e0e0e0;border:1px solid #adadad;"></div>
<svg style="left:1121.3px;top:287.4px" width="16" height="10" viewBox="0 0 16 10"><path d="M1.6,1.6 L8,8 L14.4,1.6" stroke="#404040" stroke-width="1.3" fill="none"/></svg>
<span class="t" style='left:1065.15px;top:280.00px;line-height:25px;font-size:22px;transform:scaleX(0.9662);color:#000;'>auto</span>
<span class="t" style='left:1150.20px;top:280.00px;line-height:25px;font-size:22px;transform:scaleX(1.1208);color:#000;'>/</span>
<div style="left:1162px;top:276px;width:84px;height:31px;background:#e0e0e0;border:1px solid #adadad;"></div>
<svg style="left:1221.3px;top:287.4px" width="16" height="10" viewBox="0 0 16 10"><path d="M1.6,1.6 L8,8 L14.4,1.6" stroke="#404040" stroke-width="1.3" fill="none"/></svg>
<span class="t" style='left:1165.55px;top:280.00px;line-height:25px;font-size:22px;transform:scaleX(0.9674);color:#000;'>auto</span>
<span class="t" style='left:1249.55px;top:280.00px;line-height:25px;font-size:22px;transform:scaleX(1.0284);color:#000;'>Str:</span>
<div style="left:1288px;top:274px;width:80px;height:36px;background:#fff;border:1px solid #7a7a7a;"></div>
<div style="left:1349px;top:276px;width:17px;height:17px;background:linear-gradient(#f2f2f2,#e4e4e4);border:1px solid #adadad;"></div>
<div style="left:1349px;top:292px;width:17px;height:16px;background:linear-gradient(#f2f2f2,#e4e4e4);border:1px solid #adadad;"></div>
<svg style="left:1349.5px;top:274px" width="16" height="36" viewBox="0 0 16 36"><path d="M8,6.6 L13,13 L3,13 Z M3,23 L13,23 L8,29.4 Z" fill="#000"/></svg>
<span class="t" style='left:1302.75px;top:280.00px;line-height:25px;font-size:22px;transform:scaleX(0.9400);color:#000;'>1,00</span>
<span class="t" style='left:1372.25px;top:280.00px;line-height:25px;font-size:22px;transform:scaleX(0.9804);color:#000;'>Amp:</span>
<div style="left:1426px;top:274px;width:102px;height:36px;background:#fff;border:1px solid #7a7a7a;"></div>
<div style="left:1504px;top:276px;width:22px;height:17px;background:linear-gradient(#f2f2f2,#e4e4e4);border:1px solid #adadad;"></div>
<div style="left:1504px;top:292px;width:22px;height:16px;background:linear-gradient(#f2f2f2,#e4e4e4);border:1px solid #adadad;"></div>
<svg style="left:1507px;top:274px" width="16" height="36" viewBox="0 0 16 36"><path d="M8,6.6 L13,13 L3,13 Z M3,23 L13,23 L8,29.4 Z" fill="#000"/></svg>
<span class="t" style='left:1434.50px;top:280.00px;line-height:25px;font-size:22px;transform:scaleX(0.9400);color:#000;'>0,0625</span>
<span class="t" style='left:206.65px;top:318.00px;line-height:25px;font-size:22px;transform:scaleX(0.9716);color:#000;'>Strength:</span>
<div style="left:374px;top:312px;width:52px;height:36px;background:#fff;border:1px solid #7a7a7a;"></div>
<div style="left:410px;top:314px;width:14px;height:17px;background:linear-gradient(#f2f2f2,#e4e4e4);border:1px solid #adadad;"></div>
<div style="left:410px;top:330px;width:14px;height:16px;background:linear-gradient(#f2f2f2,#e4e4e4);border:1px solid #adadad;"></div>
<svg style="left:409px;top:312px" width="16" height="36" viewBox="0 0 16 36"><path d="M8,6.6 L13,13 L3,13 Z M3,23 L13,23 L8,29.4 Z" fill="#000"/></svg>
<span class="t" style='left:394.50px;top:318.00px;line-height:25px;font-size:22px;transform:scaleX(0.9400);color:#000;'>2</span>
<div style="left:474px;top:316px;width:26px;height:26px;background:#fff;border:2px solid #333333;"></div>
<span class="t" style='left:511.30px;top:318.00px;line-height:25px;font-size:22px;transform:scaleX(0.9465);color:#000;'>OpenCL</span>
<span class="t" style='left:652.00px;top:318.00px;line-height:25px;font-size:22px;transform:scaleX(0.9866);color:#000;'>Plane:</span>
<div style="left:715px;top:314px;width:161px;height:31px;background:#e0e0e0;border:1px solid #adadad;"></div>
<svg style="left:851.3px;top:325.4px" width="16" height="10" viewBox="0 0 16 10"><path d="M1.6,1.6 L8,8 L14.4,1.6" stroke="#404040" stroke-width="1.3" fill="none"/></svg>
<span class="t" style='left:718.75px;top:318.00px;line-height:25px;font-size:22px;transform:scaleX(0.9619);color:#000;'>luma</span>
<span class="t" style='left:206.65px;top:356.00px;line-height:25px;font-size:22px;transform:scaleX(0.9704);color:#000;'>Strength (sharp):</span>
<div style="left:374px;top:350px;width:80px;height:36px;background:#fff;border:1px solid #7a7a7a;"></div>
<div style="left:435px;top:352px;width:17px;height:17px;background:linear-gradient(#f2f2f2,#e4e4e4);border:1px solid #adadad;"></div>
<div style="left:435px;top:368px;width:17px;height:16px;background:linear-gradient(#f2f2f2,#e4e4e4);border:1px solid #adadad;"></div>
<svg style="left:435.5px;top:350px" width="16" height="36" viewBox="0 0 16 36"><path d="M8,6.6 L13,13 L3,13 Z M3,23 L13,23 L8,29.4 Z" fill="#000"/></svg>
<span class="t" style='left:388.75px;top:356.00px;line-height:25px;font-size:22px;transform:scaleX(0.9400);color:#000;'>0,30</span>
<span class="t" style='left:206.65px;top:394.00px;line-height:25px;font-size:22px;transform:scaleX(0.9789);color:#000;'>Strength (blur):</span>
<div style="left:374px;top:388px;width:80px;height:36px;background:#fff;border:1px solid #7a7a7a;"></div>
<div style="left:434px;top:390px;width:18px;height:17px;background:linear-gradient(#f2f2f2,#e4e4e4);border:1px solid #adadad;"></div>
<div style="left:434px;top:406px;width:18px;height:16px;background:linear-gradient(#f2f2f2,#e4e4e4);border:1px solid #adadad;"></div>
<svg style="left:435px;top:388px" width="16" height="36" viewBox="0 0 16 36"><path d="M8,6.6 L13,13 L3,13 Z M3,23 L13,23 L8,29.4 Z" fill="#000"/></svg>
<span class="t" style='left:388.45px;top:394.00px;line-height:25px;font-size:22px;transform:scaleX(0.9400);color:#000;'>0,30</span>
<div style="left:474px;top:392px;width:26px;height:26px;background:#fff;border:2px solid #333333;"></div>
<svg style="left:474px;top:392px" width="26" height="26" viewBox="0 0 26 26"><path d="M4.2,12.6 L10.4,18.8 L22.2,6.6" stroke="#333333" stroke-width="1.7" fill="none"/></svg>
<span class="t" style='left:510.25px;top:394.00px;line-height:25px;font-size:22px;transform:scaleX(0.9581);color:#000;'>Motion Search</span>
<span class="t" style='left:207.90px;top:432.00px;line-height:25px;font-size:22px;transform:scaleX(0.9690);color:#000;'>Threshold (blur):</span>
<div style="left:374px;top:426px;width:96px;height:36px;background:#fff;border:1px solid #7a7a7a;"></div>
<div style="left:446px;top:428px;width:22px;height:17px;background:linear-gradient(#f2f2f2,#e4e4e4);border:1px solid #adadad;"></div>
<div style="left:446px;top:444px;width:22px;height:16px;background:linear-gradient(#f2f2f2,#e4e4e4);border:1px solid #adadad;"></div>
<svg style="left:449px;top:426px" width="16" height="36" viewBox="0 0 16 36"><path d="M8,6.6 L13,13 L3,13 Z M3,23 L13,23 L8,29.4 Z" fill="#000"/></svg>
<span class="t" style='left:406.55px;top:432.00px;line-height:25px;font-size:22px;transform:scaleX(0.9400);color:#000;'>400</span>
<span class="t" style='left:206.65px;top:470.00px;line-height:25px;font-size:22px;transform:scaleX(0.9769);color:#000;'>Scale (org/med):</span>
<div style="left:370px;top:464px;width:91px;height:36px;background:#fff;border:1px solid #7a7a7a;"></div>
<div style="left:439px;top:466px;width:20px;height:17px;background:linear-gradient(#f2f2f2,#e4e4e4);border:1px solid #adadad;"></div>
<div style="left:439px;top:482px;width:20px;height:16px;background:linear-gradient(#f2f2f2,#e4e4e4);border:1px solid #adadad;"></div>
<svg style="left:441px;top:464px" width="16" height="36" viewBox="0 0 16 36"><path d="M8,6.6 L13,13 L3,13 Z M3,23 L13,23 L8,29.4 Z" fill="#000"/></svg>
<span class="t" style='left:393.25px;top:470.00px;line-height:25px;font-size:22px;transform:scaleX(0.9400);color:#000;'>1,50</span>
<span class="t" style='left:473.00px;top:470.00px;line-height:25px;font-size:22px;transform:scaleX(1.1208);color:#000;'>/</span>
<div style="left:489px;top:464px;width:91px;height:36px;background:#fff;border:1px solid #7a7a7a;"></div>
<div style="left:558px;top:466px;width:20px;height:17px;background:linear-gradient(#f2f2f2,#e4e4e4);border:1px solid #adadad;"></div>
<div style="left:558px;top:482px;width:20px;height:16px;background:linear-gradient(#f2f2f2,#e4e4e4);border:1px solid #adadad;"></div>
<svg style="left:560px;top:464px" width="16" height="36" viewBox="0 0 16 36"><path d="M8,6.6 L13,13 L3,13 Z M3,23 L13,23 L8,29.4 Z" fill="#000"/></svg>
<span class="t" style='left:512.55px;top:470.00px;line-height:25px;font-size:22px;transform:scaleX(0.9400);color:#000;'>2,00</span>
<span class="t" style='left:583.55px;top:470.00px;line-height:25px;font-size:22px;transform:scaleX(0.9722);color:#000;'>Strength:</span>
<div style="left:676px;top:464px;width:63px;height:36px;background:#fff;border:1px solid #7a7a7a;"></div>
<div style="left:724px;top:466px;width:13px;height:17px;background:linear-gradient(#f2f2f2,#e4e4e4);border:1px solid #adadad;"></div>
<div style="left:724px;top:482px;width:13px;height:16px;background:linear-gradient(#f2f2f2,#e4e4e4);border:1px solid #adadad;"></div>
<svg style="left:722.5px;top:464px" width="16" height="36" viewBox="0 0 16 36"><path d="M8,6.6 L13,13 L3,13 Z M3,23 L13,23 L8,29.4 Z" fill="#000"/></svg>
<span class="t" style='left:708.05px;top:470.00px;line-height:25px;font-size:22px;transform:scaleX(0.9400);color:#000;'>3</span>
<span class="t" style='left:743.50px;top:470.00px;line-height:25px;font-size:22px;transform:scaleX(0.9562);color:#000;'>Threshold:</span>
<div style="left:846px;top:464px;width:85px;height:36px;background:#fff;border:1px solid #7a7a7a;"></div>
<div style="left:910px;top:466px;width:19px;height:17px;background:linear-gradient(#f2f2f2,#e4e4e4);border:1px solid #adadad;"></div>
<div style="left:910px;top:482px;width:19px;height:16px;background:linear-gradient(#f2f2f2,#e4e4e4);border:1px solid #adadad;"></div>
<svg style="left:911.5px;top:464px" width="16" height="36" viewBox="0 0 16 36"><path d="M8,6.6 L13,13 L3,13 Z M3,23 L13,23 L8,29.4 Z" fill="#000"/></svg>
<span class="t" style='left:870.55px;top:470.00px;line-height:25px;font-size:22px;transform:scaleX(0.9400);color:#000;'>400</span>
<div style="left:207px;top:503px;width:26px;height:26px;background:#fff;border:2px solid #333333;"></div>
<span class="t" style='left:243.55px;top:505.00px;line-height:25px;font-size:22px;transform:scaleX(0.9422);color:#000;'>Recalculate</span>
<div style="left:370px;top:503px;width:26px;height:26px;background:#fff;border:2px solid #333333;"></div>
<svg style="left:370px;top:503px" width="26" height="26" viewBox="0 0 26 26"><path d="M4.2,12.6 L10.4,18.8 L22.2,6.6" stroke="#333333" stroke-width="1.7" fill="none"/></svg>
<span class="t" style='left:406.80px;top:505.00px;line-height:25px;font-size:22px;transform:scaleX(0.9614);color:#000;'>Chroma</span>
</div>
<div style="left:1739px;top:158px;width:1px;height:531px;background:#fff;"></div>
<div style="left:1740px;top:192px;width:32px;height:361px;background:#cdcdcd;"></div>
<div style="left:141px;top:688px;width:1599px;height:1px;background:#fff;"></div>
<div style="left:175px;top:689px;width:1094px;height:32px;background:#cdcdcd;"></div>
<svg style="left:1745px;top:166px" width="24" height="20" viewBox="1745 166 24 20"><path d="M1756.5,171.9 L1762,177.4 L1762,181.1 L1756.5,175.6 L1750.9,181.1 L1750.9,177.4 Z" fill="#606060"/></svg>
<svg style="left:1745px;top:661px" width="24" height="20" viewBox="1745 661 24 20"><path d="M1756.5,676.1 L1762,670.6 L1762,666.9 L1756.5,672.4 L1750.9,666.9 L1750.9,670.6 Z" fill="#606060"/></svg>
<svg style="left:148px;top:694px" width="20" height="24" viewBox="148 694 20 24"><path d="M153.1,705.5 L158.9,700 L162.6,700 L156.9,705.5 L162.6,711 L158.9,711 Z" fill="#606060"/></svg>
<svg style="left:1711px;top:694px" width="20" height="24" viewBox="1711 694 20 24"><path d="M1726.3,705.5 L1720.5,700 L1716.8,700 L1722.5,705.5 L1716.8,711 L1720.5,711 Z" fill="#606060"/></svg>
<span class="t" style='left:11.00px;top:743.00px;line-height:25px;font-size:22px;transform:scaleX(0.9906);color:#000;'>Filter(s):</span>
<div style="left:95px;top:739px;width:400px;height:31px;background:#e0e0e0;border:1px solid #adadad;"></div>
<svg style="left:470.3px;top:750.4px" width="16" height="10" viewBox="0 0 16 10"><path d="M1.6,1.6 L8,8 L14.4,1.6" stroke="#404040" stroke-width="1.3" fill="none"/></svg>
<span class="t" style='left:99.05px;top:743.00px;line-height:25px;font-size:22px;transform:scaleX(1.0071);color:#000;'>All</span>
<svg style="left:495px;top:730px" width="60" height="50" viewBox="495 730 60 50"><path d="M501.9,747.4 L514.8,735.7 L514.8,741.3 L525.4,741.3 A16.3,16.3 0 0 1 525.4,773.9 L509.2,773.9 L509.2,762 L525.4,762 A4.55,4.55 0 0 0 525.4,752.9 L514.8,752.9 L514.8,759 Z" fill="#000"/></svg>
<div style="left:549px;top:739px;width:936px;height:31px;background:#e0e0e0;border:1px solid #adadad;"></div>
<svg style="left:1460.3px;top:750.4px" width="16" height="10" viewBox="0 0 16 10"><path d="M1.6,1.6 L8,8 L14.4,1.6" stroke="#404040" stroke-width="1.3" fill="none"/></svg>
<svg style="left:1490px;top:730px" width="300" height="50" viewBox="1490 730 300 50">
<path d="M1512,768 L1512,749 M1500.6,757.4 L1512,746 L1523.4,757.4" stroke="#000" stroke-width="6" fill="none" stroke-linejoin="miter"/>
<path d="M1551,755 L1573.5,755" stroke="#000" stroke-width="3.7" stroke-linecap="round" fill="none"/>
<path d="M1597.5,755.2 L1625,755.2 M1611.3,741.5 L1611.3,769" stroke="#000" stroke-width="6" stroke-linecap="round" fill="none"/>
<g transform="translate(1140,0)"><path d="M501.9,747.4 L514.8,735.7 L514.8,741.3 L525.4,741.3 A16.3,16.3 0 0 1 525.4,773.9 L509.2,773.9 L509.2,762 L525.4,762 A4.55,4.55 0 0 0 525.4,752.9 L514.8,752.9 L514.8,759 Z" fill="#000"/></g>
<path d="M1649.7,755.8 L1681.7,755.8 M1665.6,740 L1665.6,772.5" stroke="#8a7f8a" stroke-width="6" fill="none"/>
<path d="M1705.4,756.9 Q1720.9,739.6 1736.4,756.9 Q1720.9,774.2 1705.4,756.9 Z" stroke="#2b2b2b" stroke-width="2.8" fill="#fff" stroke-linejoin="round"/>
<circle cx="1720.9" cy="756.9" r="6.7" fill="none" stroke="#2b2b2b" stroke-width="1.5"/>
<circle cx="1721.3" cy="757.2" r="4.5" fill="#2b2b2b"/><path d="M1721.3,757.2 L1715.5,754.8 L1718.6,751.4 Z" fill="#fff"/>
<g stroke="#383838" stroke-width="2.4" fill="#fff" stroke-linejoin="round"><rect x="1754.3" y="737.2" width="18.2" height="27.3"/><rect x="1751.2" y="741.2" width="17.6" height="27.4"/><rect x="1747.3" y="745" width="18.4" height="27.6"/></g>
<path d="M1747,773 h19" stroke="#111" stroke-width="1.6"/>
<path d="M1750,748.4 h13 M1750,752.4 h13 M1750,756.4 h13 M1750,760.4 h13 M1750,764.4 h13 M1750,768.4 h13" stroke="#303030" stroke-width="2.5"/>
</svg>
<div style="left:6px;top:800px;width:434px;height:97px;border:1px solid #dadada;"></div>
<div style="left:88px;top:795px;width:270px;height:17px;background:#fff;"></div>
<span class="t" style='left:90.10px;top:789.00px;line-height:25px;font-size:22px;transform:scaleX(0.9768);color:#000;'>Current Frame Rate / Count</span>
<span class="t" style='left:8.70px;top:815.00px;line-height:25px;font-size:22px;transform:scaleX(0.9466);color:#707070;'>Container frame rate:</span>
<span class="t" style='left:215.70px;top:815.00px;line-height:25px;font-size:22px;transform:scaleX(1.1021);color:#707070;'>?</span>
<span class="t" style='left:229.00px;top:815.00px;line-height:25px;font-size:22px;transform:scaleX(0.9837);color:#707070;'>Input frame count:</span>
<span class="t" style='left:427.30px;top:815.00px;line-height:25px;font-size:22px;transform:scaleX(1.1021);color:#707070;'>?</span>
<span class="t" style='left:8.45px;top:842.00px;line-height:25px;font-size:22px;transform:scaleX(0.9534);color:#707070;'>Stream frame rate:</span>
<span class="t" style='left:215.70px;top:842.00px;line-height:25px;font-size:22px;transform:scaleX(1.1021);color:#707070;'>?</span>
<span class="t" style='left:8.70px;top:869.00px;line-height:25px;font-size:22px;transform:scaleX(0.9563);color:#707070;'>Output frame rate:</span>
<span class="t" style='left:215.70px;top:869.00px;line-height:25px;font-size:22px;transform:scaleX(1.1021);color:#707070;'>?</span>
<span class="t" style='left:229.60px;top:869.00px;line-height:25px;font-size:22px;transform:scaleX(0.9636);color:#707070;'>Output frame count:</span>
<span class="t" style='left:427.30px;top:869.00px;line-height:25px;font-size:22px;transform:scaleX(1.1021);color:#707070;'>?</span>
<div style="left:446px;top:790px;width:1093px;height:106px;background:#fff;border:1px solid #7a7a7a;"></div>
<span class="t" style='left:1544.25px;top:792.00px;line-height:25px;font-size:22px;transform:scaleX(0.9695);color:#000;'>Support:</span>
<div style="left:1630px;top:788px;width:159px;height:31px;background:#e0e0e0;border:1px solid #adadad;"></div>
<svg style="left:1764.3px;top:799.4px" width="16" height="10" viewBox="0 0 16 10"><path d="M1.6,1.6 L8,8 L14.4,1.6" stroke="#404040" stroke-width="1.3" fill="none"/></svg>
<span class="t" style='left:1633.45px;top:792.00px;line-height:25px;font-size:22px;transform:scaleX(0.9547);color:#000;'>Vapoursynth</span>
<div style="left:1651px;top:822px;width:26px;height:26px;background:#fff;border:2px solid #333333;"></div>
<svg style="left:1651px;top:822px" width="26" height="26" viewBox="0 0 26 26"><path d="M4.2,12.6 L10.4,18.8 L22.2,6.6" stroke="#333333" stroke-width="1.7" fill="none"/></svg>
<span class="t" style='left:1687.75px;top:824.00px;line-height:25px;font-size:22px;transform:scaleX(0.9574);color:#000;'>Filter view</span>
<svg style="left:1697px;top:852px" width="93" height="46" viewBox="1697 852 93 46"><rect x="1697" y="852" width="92.3" height="7" fill="#000"/><rect x="1697" y="891" width="92.3" height="7" fill="#000"/><rect x="1699.6" y="854.4" width="2.5" height="3.8" rx="0.7" fill="#fff"/><rect x="1699.6" y="892" width="2.5" height="3.8" rx="0.7" fill="#fff"/><rect x="1704.7" y="854.4" width="2.5" height="3.8" rx="0.7" fill="#fff"/><rect x="1704.7" y="892" width="2.5" height="3.8" rx="0.7" fill="#fff"/><rect x="1709.8" y="854.4" width="2.5" height="3.8" rx="0.7" fill="#fff"/><rect x="1709.8" y="892" width="2.5" height="3.8" rx="0.7" fill="#fff"/><rect x="1714.9" y="854.4" width="2.5" height="3.8" rx="0.7" fill="#fff"/><rect x="1714.9" y="892" width="2.5" height="3.8" rx="0.7" fill="#fff"/><rect x="1720.0" y="854.4" width="2.5" height="3.8" rx="0.7" fill="#fff"/><rect x="1720.0" y="892" width="2.5" height="3.8" rx="0.7" fill="#fff"/><rect x="1725.1" y="854.4" width="2.5" height="3.8" rx="0.7" fill="#fff"/><rect x="1725.1" y="892" width="2.5" height="3.8" rx="0.7" fill="#fff"/><rect x="1730.2" y="854.4" width="2.5" height="3.8" rx="0.7" fill="#fff"/><rect x="1730.2" y="892" width="2.5" height="3.8" rx="0.7" fill="#fff"/><rect x="1735.3" y="854.4" width="2.5" height="3.8" rx="0.7" fill="#fff"/><rect x="1735.3" y="892" width="2.5" height="3.8" rx="0.7" fill="#fff"/><rect x="1740.4" y="854.4" width="2.5" height="3.8" rx="0.7" fill="#fff"/><rect x="1740.4" y="892" width="2.5" height="3.8" rx="0.7" fill="#fff"/><rect x="1745.5" y="854.4" width="2.5" height="3.8" rx="0.7" fill="#fff"/><rect x="1745.5" y="892" width="2.5" height="3.8" rx="0.7" fill="#fff"/><rect x="1750.6" y="854.4" width="2.5" height="3.8" rx="0.7" fill="#fff"/><rect x="1750.6" y="892" width="2.5" height="3.8" rx="0.7" fill="#fff"/><rect x="1755.7" y="854.4" width="2.5" height="3.8" rx="0.7" fill="#fff"/><rect x="1755.7" y="892" width="2.5" height="3.8" rx="0.7" fill="#fff"/><rect x="1760.8" y="854.4" width="2.5" height="3.8" rx="0.7" fill="#fff"/><rect x="1760.8" y="892" width="2.5" height="3.8" rx="0.7" fill="#fff"/><rect x="1765.9" y="854.4" width="2.5" height="3.8" rx="0.7" fill="#fff"/><rect x="1765.9" y="892" width="2.5" height="3.8" rx="0.7" fill="#fff"/><rect x="1771.0" y="854.4" width="2.5" height="3.8" rx="0.7" fill="#fff"/><rect x="1771.0" y="892" width="2.5" height="3.8" rx="0.7" fill="#fff"/><rect x="1776.1" y="854.4" width="2.5" height="3.8" rx="0.7" fill="#fff"/><rect x="1776.1" y="892" width="2.5" height="3.8" rx="0.7" fill="#fff"/><rect x="1781.2" y="854.4" width="2.5" height="3.8" rx="0.7" fill="#fff"/><rect x="1781.2" y="892" width="2.5" height="3.8" rx="0.7" fill="#fff"/><rect x="1786.3" y="854.4" width="2.5" height="3.8" rx="0.7" fill="#fff"/><rect x="1786.3" y="892" width="2.5" height="3.8" rx="0.7" fill="#fff"/><path d="M1716.2,859 V891 M1752.6,859 V891" stroke="#111" stroke-width="1.6"/><path d="M1788.6,859 V891" stroke="#333" stroke-width="0.8"/><path d="M1700.8,866.8 L1712,875.2 L1700.8,883.6 Z" stroke="#333" stroke-width="1.5" fill="none"/><path d="M1718.8,881.2 Q1734,865 1749,881.2 Q1734,897.5 1718.8,881.2 Z" stroke="#d0d6d0" stroke-width="2" fill="none"/><circle cx="1736.5" cy="881.5" r="5.2" fill="none" stroke="#d0d6d0" stroke-width="1.6"/><path d="M1734.3,873.6 Q1725,874.5 1718.8,881.2 Q1725,888.5 1734.3,889.3" stroke="#2a2a2a" stroke-width="2.1" fill="none"/><path d="M1734.3,876.5 A5,5 0 0 0 1734.3,886.5 Z" fill="#2a2a2a"/><path d="M1734.3,879 l-2.6,3.2 l2.6,0 Z" fill="#fff"/><circle cx="1734.7" cy="864.9" r="2.2" fill="none" stroke="#333" stroke-width="2.2" stroke-dasharray="1.6 0"/><circle cx="1734.7" cy="864.9" r="3.4" fill="none" stroke="#333" stroke-width="1.2" stroke-dasharray="1.3 1.37"/><circle cx="1744.6" cy="867" r="3.6" fill="none" stroke="#2a2a2a" stroke-width="2.6"/><circle cx="1744.6" cy="867" r="5.7" fill="none" stroke="#2a2a2a" stroke-width="1.8" stroke-dasharray="1.6 1.384"/><circle cx="1744.6" cy="867" r="1.3" fill="none" stroke="#2a2a2a" stroke-width="0.9"/><text x="1770.2" y="872.6" text-anchor="middle" font-family="Liberation Sans,sans-serif" font-weight="bold" font-size="10" textLength="18" lengthAdjust="spacingAndGlyphs" fill="#111">VPY</text><text x="1770.8" y="884.7" text-anchor="middle" font-family="Liberation Sans,sans-serif" font-size="10.6" textLength="33.8" lengthAdjust="spacingAndGlyphs" fill="#111">FILTER</text></svg>
</div></body></html>
